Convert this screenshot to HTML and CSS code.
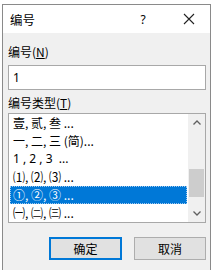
FILE: index.html
```html
<!DOCTYPE html>
<html lang="zh-CN">
<head>
    <meta charset="UTF-8">
    <meta name="viewport" content="width=device-width, initial-scale=1.0">
    <title>编号</title>
    <link rel="stylesheet" href="styles.css">
</head>
<body>
    <div class="dialog">
        <div class="titlebar">
            <span class="title">编号</span>
            <span class="help">?</span>
            <span class="close">
                <svg viewBox="0 0 12 12" width="12" height="12">
                    <path d="M1 1L11 11M11 1L1 11" stroke="#222" stroke-width="1.1" fill="none"/>
                </svg>
            </span>
        </div>

        <div class="content">
            <div class="label">编号(<u>N</u>)</div>
            <div class="input">1</div>

            <div class="label label-list">编号类型(<u>T</u>)</div>
            <div class="listbox">
                <ul class="items">
                    <li>壹, 贰, 叁 ...</li>
                    <li>一, 二, 三 (简)...</li>
                    <li class="latin">1 , 2 , 3 &nbsp;...</li>
                    <li>⑴, ⑵, ⑶ ...</li>
                    <li class="selected">①, ②, ③ ...</li>
                    <li>㈠, ㈡, ㈢ ...</li>
                </ul>
                <div class="scrollbar">
                    <div class="arrow">
                        <svg viewBox="0 0 8 5" width="8" height="5">
                            <path d="M0.5 4.5L4 1L7.5 4.5" stroke="#606060" stroke-width="1.3" fill="none"/>
                        </svg>
                    </div>
                    <div class="track">
                        <div class="thumb"></div>
                    </div>
                    <div class="arrow">
                        <svg viewBox="0 0 8 5" width="8" height="5">
                            <path d="M0.5 0.5L4 4L7.5 0.5" stroke="#606060" stroke-width="1.3" fill="none"/>
                        </svg>
                    </div>
                </div>
            </div>

            <div class="buttons">
                <button class="btn btn-default">确定</button>
                <button class="btn">取消</button>
            </div>
        </div>
    </div>
</body>
</html>
```

FILE: styles.css
```css
/* Base */
body {
    margin: 0;
    padding: 0;
    background-color: #fff;
    font-family: "Noto Sans CJK SC", "Noto Sans", sans-serif;
    font-size: 12px;
    color: #000;
}

.dialog {
    margin: 4px 0 0 2px;
    width: 207px;
    height: 266px;
    border: 1px solid #8a8a8a;
    border-bottom: none;
    display: flex;
    flex-direction: column;
}

/* Title bar */
.titlebar {
    height: 28px;
    background-color: #fff;
    display: flex;
    align-items: center;
    flex-shrink: 0;
}

.title {
    padding-left: 7px;
    font-size: 12.5px;
    flex: 1;
}

.help {
    width: 12px;
    text-align: center;
    font-family: "Noto Sans", sans-serif;
    font-size: 12px;
    margin-right: 34px;
}

.close {
    width: 12px;
    height: 12px;
    display: flex;
    margin-right: 15px;
}

/* Content */
.content {
    flex: 1;
    background-color: #f0f0f0;
    padding: 11px 4px 0 5px;
}

.label {
    line-height: 16px;
    height: 16px;
}

.label u {
    text-underline-offset: 1px;
}

.input {
    margin-top: 5px;
    height: 23px;
    border: 1px solid #a8a8a8;
    background-color: #fff;
    padding-left: 4px;
    line-height: 23px;
    font-family: "Noto Sans", sans-serif;
}

.label-list {
    margin-top: 5px;
}

/* List box */
.listbox {
    margin-top: 2px;
    height: 108px;
    border: 1px solid #a8a8a8;
    background-color: #fff;
    display: flex;
}

.items {
    list-style: none;
    margin: 0;
    padding: 0 0 0 1px;
    flex: 1;
}

.items li {
    height: 18px;
    line-height: 18px;
    padding-left: 3px;
    margin-right: 1px;
    white-space: nowrap;
    box-sizing: border-box;
}

.items li.latin {
    font-family: "Noto Sans", sans-serif;
}

.items li.selected {
    background-color: #0078d7;
    color: #fff;
    outline: 1px dotted #9fc8ee;
    outline-offset: -1px;
}

.scrollbar {
    width: 17px;
    background-color: #f0f0f0;
    display: flex;
    flex-direction: column;
}

.arrow {
    height: 17px;
    display: flex;
    align-items: center;
    justify-content: center;
}

.track {
    flex: 1;
    padding-top: 38px;
}

.thumb {
    margin: 0 1px;
    height: 28px;
    background-color: #cdcdcd;
}

/* Buttons */
.buttons {
    margin-top: 14px;
    display: flex;
    justify-content: flex-end;
    gap: 12px;
}

.btn {
    width: 72px;
    height: 23px;
    padding: 0;
    background-color: #e1e1e1;
    border: 1px solid #adadad;
    font-family: "Noto Sans CJK SC", sans-serif;
    font-size: 12px;
    color: #000;
}

.btn-default {
    width: 73px;
    border: 2px solid #0078d7;
}
```
